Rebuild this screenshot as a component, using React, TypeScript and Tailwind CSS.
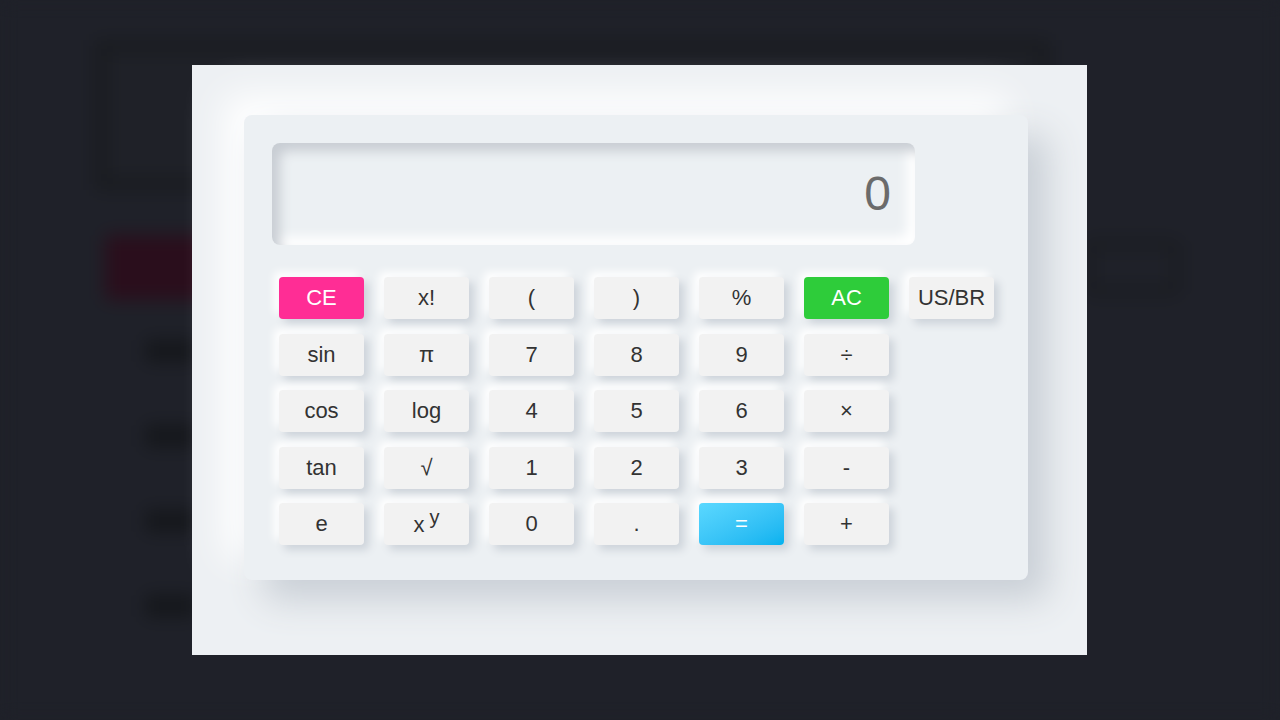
const keys = [
  ["CE", "x!", "(", ")", "%", "AC", "US/BR"],
  ["sin", "π", "7", "8", "9", "÷"],
  ["cos", "log", "4", "5", "6", "×"],
  ["tan", "√", "1", "2", "3", "-"],
  ["e", "xy", "0", ".", "=", "+"],
]

const keyStyle = (k: string) => {
  if (k === "CE") return "bg-[#ff2d95] text-white"
  if (k === "AC") return "bg-[#2ecc3a] text-white"
  if (k === "=") return "bg-gradient-to-br from-[#5ad8ff] to-[#00b2ef] text-white"
  return "bg-[#f2f2f2] text-[#333]"
}

const Key = ({ k }: { k: string }) => (
  <button
    className={`h-[42px] w-[85px] rounded-[4px] text-[22px] leading-none flex items-center justify-center shadow-[5px_5px_9px_#cdd3da,-5px_-5px_9px_#ffffff] ${keyStyle(k)}`}
  >
    {k === "xy" ? (
      <span className="flex items-end pt-[2px]">
        <span>x</span>
        <span className="relative -top-[9px] ml-[5px] text-[20px]">y</span>
      </span>
    ) : (
      k
    )}
  </button>
)

// blurred page behind the modal
const Backdrop = () => (
  <div className="h-[720px] w-[1280px] overflow-hidden bg-[#1f2129] blur-[9px] pl-[95px] pt-[40px]">
    <div className="h-[150px] w-[955px] border-[12px] border-[#191b1f] bg-[#1f2128]" />
    <div className="mt-[45px] flex items-center">
      <div className="ml-[10px] h-[65px] w-[150px] rounded bg-[#2a0e1c]" />
      <div className="ml-[830px] h-[55px] w-[95px] rounded-[6px] border-[8px] border-[#191b1f]" />
    </div>
    <div className="mt-[40px] flex flex-col gap-[63px] pl-[50px]">
      {[0, 1, 2, 3].map((i) => (
        <div key={i} className="h-[22px] w-[50px] rounded bg-[#15171b]" />
      ))}
    </div>
  </div>
)

export default function App() {
  return (
    <div className="relative h-[720px] w-[1280px] overflow-hidden bg-[#1f2129] font-['Liberation_Sans',Arial,sans-serif]">
      <Backdrop />
      <div className="absolute inset-0 pl-[192px] pt-[65px]">
        <div className="h-[590px] w-[895px] bg-[#edf0f3] pl-[52px] pt-[50px]">
          <div className="h-[465px] w-[784px] rounded-[8px] bg-[#ecf0f3] pl-[28px] pt-[28px] shadow-[20px_20px_36px_#c9cfd6,-20px_-20px_36px_#ffffff]">
            <div className="flex h-[102px] w-[643px] items-center justify-end rounded-[8px] bg-[#ecf0f3] pr-[24px] text-[48px] text-[#6b6b6b] shadow-[inset_8px_8px_12px_#c8cdd3,inset_-8px_-8px_12px_#ffffff]">
              0
            </div>
            <div className="mt-[32px] flex flex-col gap-[14.5px] pl-[7px]">
              {keys.map((row, i) => (
                <div key={i} className="flex gap-[20px]">
                  {row.map((k) => (
                    <Key key={k} k={k} />
                  ))}
                </div>
              ))}
            </div>
          </div>
        </div>
      </div>
    </div>
  )
}
